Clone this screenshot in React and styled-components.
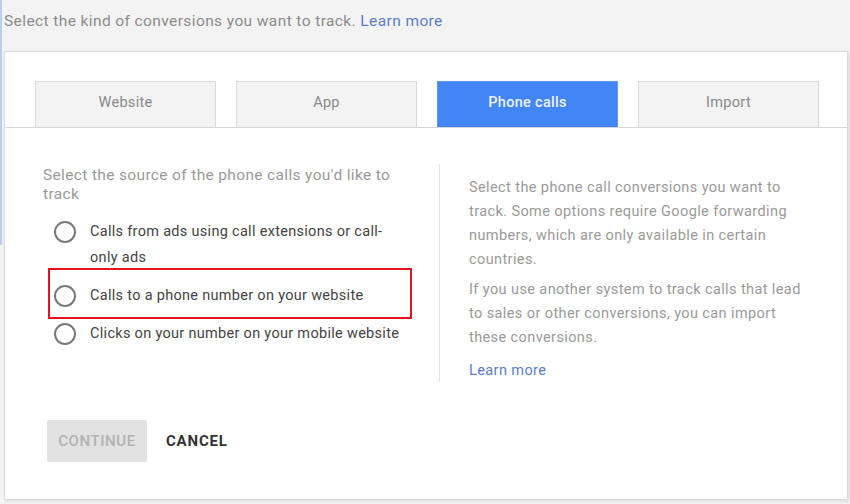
import React from 'react'
import styled, { createGlobalStyle } from 'styled-components'

const GlobalStyle = createGlobalStyle`
  html, body {
    margin: 0;
    padding: 0;
    background: #f3f3f3;
    font-family: Roboto, 'Liberation Sans', Arial, sans-serif;
  }
`

const tabs = ['Website', 'App', 'Phone calls', 'Import']

const options = [
  { id: 'ads', label: 'Calls from ads using call extensions or call-only ads' },
  { id: 'site', label: 'Calls to a phone number on your website', marked: true },
  { id: 'mobile', label: 'Clicks on your number on your mobile website' },
]

const App = () => {
  return (
    <Page>
      <GlobalStyle />
      <Intro>
        Select the kind of conversions you want to track. <Link>Learn more</Link>
      </Intro>
      <Card>
        <TabBar>
          {tabs.map((tab) => (
            <Tab key={tab} $active={tab === 'Phone calls'}>
              {tab}
            </Tab>
          ))}
        </TabBar>
        <Body>
          <Source>
            <Heading>Select the source of the phone calls you'd like to track</Heading>
            <Options>
              {options.map((option) => (
                <Option key={option.id} $marked={option.marked}>
                  <Radio />
                  <OptionLabel>{option.label}</OptionLabel>
                </Option>
              ))}
            </Options>
          </Source>
          <Help>
            <HelpText>
              Select the phone call conversions you want to track. Some options require Google
              forwarding numbers, which are only available in certain countries.
            </HelpText>
            <HelpText $gap={6}>
              If you use another system to track calls that lead to sales or other conversions,
              you can import these conversions.
            </HelpText>
            <HelpLink>Learn more</HelpLink>
          </Help>
        </Body>
        <Footer>
          <Continue disabled>CONTINUE</Continue>
          <Cancel>CANCEL</Cancel>
        </Footer>
      </Card>
    </Page>
  )
}

const Page = styled.div`
  position: relative;
  width: 850px;
  height: 504px;
  box-sizing: border-box;
  padding: 0 2px 0 4px;
  overflow: hidden;

  &::before {
    content: '';
    position: absolute;
    left: 0;
    top: 0;
    width: 2px;
    height: 245px;
    background: #b7d0f2;
  }
`

const Intro = styled.div`
  padding-top: 11px;
  font-size: 15.5px;
  letter-spacing: 0.4px;
  line-height: 20px;
  color: #8c8c8c;
`

const Link = styled.span`
  color: #5b7ec6;
`

const Card = styled.div`
  margin-top: 20px;
  width: 844px;
  box-sizing: border-box;
  background: #fff;
  border: 1px solid #dcdcdc;
  box-shadow: 1px 1px 3px rgba(0, 0, 0, 0.12);
  padding-top: 29px;
  padding-bottom: 37px;
`

const TabBar = styled.div`
  display: grid;
  grid-template-columns: repeat(4, 181px);
  gap: 20px;
  padding: 0 30px;
  border-bottom: 1px solid #d6d6d6;
`

const Tab = styled.div`
  height: 46px;
  box-sizing: border-box;
  padding-bottom: 5px;
  display: flex;
  align-items: center;
  justify-content: center;
  font-size: 14.5px;
  letter-spacing: 0.3px;
  border: 1px solid ${(p) => (p.$active ? '#5f97f2' : '#dadada')};
  border-bottom: none;
  background: ${(p) => (p.$active ? '#4285f4' : '#f3f3f3')};
  color: ${(p) => (p.$active ? '#eef3fd' : '#8a8a8a')};
  font-weight: ${(p) => (p.$active ? 500 : 400)};
`

const Body = styled.div`
  display: flex;
  align-items: flex-start;
  padding: 37px 0 0 38px;
`

const Source = styled.div`
  width: 362px;
  padding-top: 1px;
  margin-right: 34px;
`

const Heading = styled.div`
  font-size: 15.5px;
  letter-spacing: 0.35px;
  line-height: 19px;
  color: #9a9a9a;
`

const Options = styled.div`
  display: flex;
  flex-direction: column;
  gap: 12px;
  margin-top: 15px;
`

const Option = styled.div`
  position: relative;
  display: flex;
  align-items: flex-start;
  gap: 14px;
  padding-left: 11px;

  ${(p) =>
    p.$marked &&
    `
    &::after {
      content: '';
      position: absolute;
      left: 5px;
      right: -7px;
      top: -15px;
      bottom: -10px;
      border: 2px solid #e8141b;
    }
  `}
`

const Radio = styled.span`
  flex: none;
  width: 22px;
  height: 22px;
  box-sizing: border-box;
  margin-top: 2px;
  border: 2px solid #7a7a7a;
  border-radius: 50%;
`

const OptionLabel = styled.span`
  font-size: 14.5px;
  letter-spacing: 0.3px;
  line-height: 26px;
  color: #444;
`

const Help = styled.div`
  width: 345px;
  border-left: 1px solid #e4e4e4;
  padding: 12px 0 0 29px;
  margin-top: -1px;
`

const HelpText = styled.p`
  margin: ${(p) => p.$gap || 0}px 0 0;
  font-size: 14.5px;
  letter-spacing: 0.4px;
  line-height: 24px;
  color: #9a9a9a;
`

const HelpLink = styled.div`
  margin-top: 10px;
  font-size: 14.5px;
  letter-spacing: 0.4px;
  line-height: 22px;
  color: #5b7ec6;
`

const Footer = styled.div`
  display: flex;
  align-items: center;
  gap: 19px;
  margin-top: 38px;
  padding-left: 42px;
`

const Continue = styled.button`
  height: 42px;
  width: 100px;
  padding: 0;
  border: none;
  border-radius: 2px;
  background: #e2e2e2;
  color: #b3b3b3;
  font-family: inherit;
  font-size: 15px;
  font-weight: 500;
  letter-spacing: 0.6px;
`

const Cancel = styled.button`
  padding: 0;
  border: none;
  background: none;
  color: #333;
  font-family: inherit;
  font-size: 15px;
  font-weight: 700;
  letter-spacing: 0.8px;
`

export default App
